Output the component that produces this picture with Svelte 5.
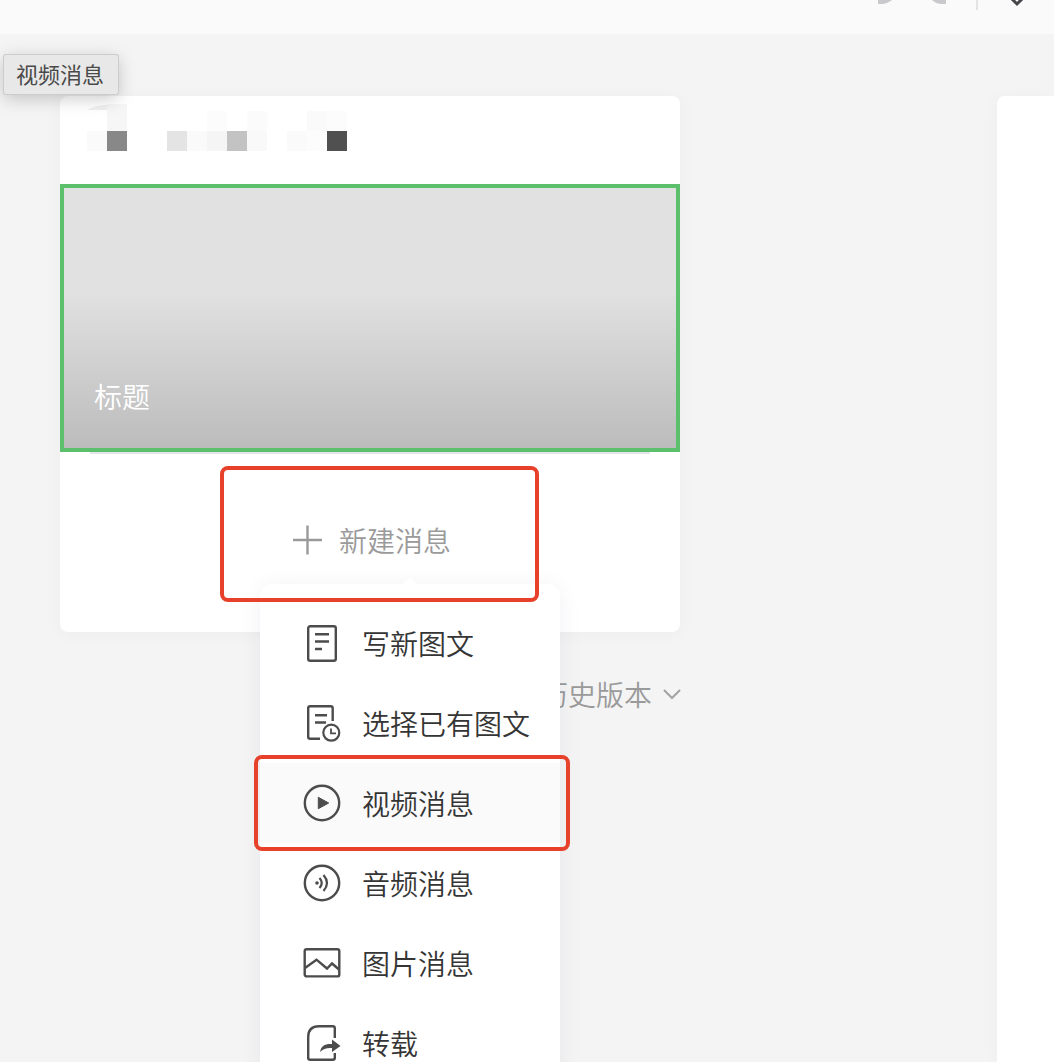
<script>
    let active = $state("video");

    const items = [
        { id: "article", label: "写新图文" },
        { id: "existing", label: "选择已有图文" },
        { id: "video", label: "视频消息" },
        { id: "audio", label: "音频消息" },
        { id: "image", label: "图片消息" },
        { id: "share", label: "转载" },
    ];

    // blurred account name: column, row, colour
    const blocks = [
        [1, 0, "#f6f6f6"],
        [6, 0, "#fcfcfc"],
        [8, 0, "#fbfbfb"],
        [11, 0, "#fafafa"],
        [12, 0, "#fcfcfc"],
        [0, 1, "#fafafa"],
        [1, 1, "#888888"],
        [4, 1, "#e4e4e4"],
        [5, 1, "#fafafa"],
        [6, 1, "#f5f5f5"],
        [7, 1, "#c3c3c3"],
        [8, 1, "#f9f9f9"],
        [10, 1, "#fafafa"],
        [11, 1, "#fcfcfc"],
        [12, 1, "#505050"],
    ];
</script>

<div class="page">
    <header>
        <button aria-label="撤销">
            <svg width="14" height="12" viewBox="0 0 14 12">
                <path d="M0 0H14Q9 4 4 4H0Z" fill="#c9c9cb" />
            </svg>
        </button>
        <button aria-label="重做">
            <svg width="14" height="12" viewBox="0 0 14 12">
                <path d="M0 0H14V4H10Q4 4 0 0Z" fill="#c9c9cb" />
            </svg>
        </button>
        <span class="split"></span>
        <button aria-label="更多">
            <svg width="14" height="12" viewBox="0 0 14 12">
                <path d="M1 -2L7 4L13 -2" fill="none" stroke="#444548" stroke-width="3" />
            </svg>
        </button>
    </header>

    <div class="tooltip" role="tooltip">视频消息</div>

    <main>
        <section class="left">
            <div class="card">
                <div class="account">
                    <svg width="260" height="48" viewBox="0 0 260 48">
                        <path d="M0 7Q8 2 20 2V7Z" fill="#f0f0f0" />
                        <rect x="20" y="1" width="20" height="8" fill="#f6f6f6" />
                        {#each blocks as [col, row, color]}
                            <rect x={col * 20} y={8 + row * 20} width="20" height="20" fill={color} />
                        {/each}
                    </svg>
                </div>
                <div class="cover">标题</div>
                <div class="add">
                    <button class="add-btn">
                        <svg width="36" height="36" viewBox="0 0 36 36" stroke="#9a9a9a" stroke-width="2.4">
                            <path d="M4 18H33M18.5 3.5V32.5" />
                        </svg>
                        新建消息
                    </button>
                    <span class="mark mark-add"></span>
                    <div class="menu">
                        <span class="arrow"></span>
                        {#each items as item}
                            <button
                                class="item"
                                class:active={active === item.id}
                                onclick={() => (active = item.id)}
                            >
                                <svg
                                    width="40"
                                    height="40"
                                    viewBox="0 0 40 40"
                                    fill="none"
                                    stroke="#4c4c4c"
                                    stroke-width="2.4"
                                >
                                    {#if item.id === "article"}
                                        <rect x="6.2" y="3.2" width="27.6" height="34.6" rx="2" />
                                        <path d="M13 11.3H27M13 18.5H27M13 26H20" />
                                    {:else if item.id === "existing"}
                                        <path d="M30.7 18V5.2Q30.7 3.2 28.7 3.2H8.2Q6.2 3.2 6.2 5.2V33.8Q6.2 35.8 8.2 35.8H18" />
                                        <path d="M13 12.2H25M13 19.5H24" />
                                        <circle cx="29.3" cy="29.7" r="8" stroke-width="2.2" />
                                        <path d="M29 25.4V30.4H34" stroke-width="1.8" />
                                    {:else if item.id === "video"}
                                        <circle cx="20" cy="20" r="17.2" />
                                        <path d="M16.3 14.3L26.7 20L16.3 25.7Z" fill="#4c4c4c" stroke-width="1" />
                                    {:else if item.id === "audio"}
                                        <circle cx="20" cy="20" r="17.2" />
                                        <circle cx="15" cy="20" r="1.8" fill="#4c4c4c" stroke="none" />
                                        <path d="M17.5 15Q22 20 17.5 25M21.5 12Q28.5 20 21.5 28" stroke-width="2.2" />
                                    {:else if item.id === "image"}
                                        <rect x="2.7" y="6.2" width="34.6" height="27.2" rx="2" />
                                        <path d="M3 25L14.5 16.7L25 25.5L30 20.5L37 26.5" />
                                    {:else}
                                        <path d="M32.8 15V5.2Q32.8 3.2 30.8 3.2H17Q6.2 3.2 6.2 14V34.8Q6.2 36.8 8.2 36.8H30.8Q32.8 36.8 32.8 34.8V30" />
                                        <path
                                            d="M18 29C19 23 23 20.5 30 21V16.5L38.5 23L30 29V25C25 24.5 21 26 18 29Z"
                                            fill="#4c4c4c"
                                            stroke="none"
                                        />
                                    {/if}
                                </svg>
                                {item.label}
                                {#if item.id === "video"}
                                    <span class="mark mark-item"></span>
                                {/if}
                            </button>
                        {/each}
                    </div>
                </div>
            </div>
            <button class="history">
                历史版本
                <svg width="20" height="20" viewBox="0 0 20 20">
                    <path d="M2 6L10 14L18 6" fill="none" stroke="#a3a3a3" stroke-width="2" />
                </svg>
            </button>
        </section>
        <section class="editor"></section>
    </main>
</div>

<style>
    :global(body) {
        margin: 0;
        background: #f4f4f4;
    }

    .page {
        position: relative;
        display: flex;
        flex-direction: column;
        height: 100vh;
        overflow: hidden;
        background: #f4f4f4;
        font-family: "Noto Sans CJK SC", sans-serif;
        font-size: 28px;
        font-weight: 350;
        line-height: 40px;
        color: #353535;
    }

    button {
        font: inherit;
        color: inherit;
        padding: 0;
        border: none;
        background: none;
        cursor: pointer;
    }

    svg {
        display: block;
        flex: none;
    }

    header {
        display: flex;
        flex: none;
        justify-content: flex-end;
        align-items: flex-start;
        box-sizing: border-box;
        height: 34px;
        padding-right: 30px;
        background: #fafafb;
    }

    header button + button {
        margin-left: 40px;
    }

    .split {
        width: 2px;
        height: 10px;
        margin: 0 32px 0 30px;
        background: #e4e4e7;
    }

    .tooltip {
        position: absolute;
        top: 55px;
        left: 4px;
        z-index: 5;
        padding: 4px 14px 6px 12px;
        border-radius: 2px;
        background: #e8e8e8;
        box-shadow:
            0 0 0 1px #cccccc,
            0 4px 18px rgba(0, 0, 0, 0.22);
        font-size: 22px;
        font-weight: 400;
        line-height: 29px;
        color: #4a4a4a;
    }

    main {
        display: flex;
        flex: 1;
        padding: 62px 0 0 60px;
    }

    .left {
        flex: none;
        width: 620px;
        max-width: 100%;
    }

    .card,
    .editor {
        background: #fff;
        border-radius: 8px;
        box-shadow: 0 2px 20px rgba(0, 0, 0, 0.03);
    }

    .editor {
        flex: 1;
        margin-left: 317px;
        border-radius: 8px 0 0 0;
    }

    .account {
        box-sizing: border-box;
        height: 88px;
        padding: 7px 27px;
    }

    .cover {
        display: flex;
        align-items: flex-end;
        box-sizing: border-box;
        height: 268px;
        padding: 0 30px 32px;
        border: 4px solid #5bbf6b;
        background: linear-gradient(#e1e1e1 40%, #bcbcbc);
        color: #fff;
    }

    .add {
        position: relative;
        display: flex;
        justify-content: center;
        height: 180px;
    }

    .add::before {
        content: "";
        position: absolute;
        top: 0;
        left: 30px;
        right: 30px;
        height: 2px;
        background: #e4e5eb;
    }

    .add-btn {
        display: flex;
        align-items: center;
        gap: 14px;
        width: 100%;
        justify-content: center;
        padding-bottom: 4px;
        color: #9a9a9a;
    }

    .menu {
        position: absolute;
        top: 132px;
        left: 200px;
        z-index: 2;
        width: 300px;
        padding: 19px 0;
        border-radius: 12px;
        background: #fff;
        box-shadow: 0 2px 24px rgba(40, 40, 80, 0.06);
    }

    .arrow {
        position: absolute;
        top: -7px;
        left: 50%;
        width: 0;
        margin-left: -8px;
        border: 8px solid transparent;
        border-top: none;
        border-bottom-color: #fff;
    }

    .item {
        position: relative;
        display: flex;
        align-items: center;
        gap: 20px;
        width: 100%;
        height: 80px;
        padding-left: 42px;
    }

    .item.active {
        background: #fafafa;
    }

    /* red frames that point out the steps */
    .mark {
        position: absolute;
        z-index: 3;
        box-sizing: border-box;
        border: 4px solid #e8412b;
        border-radius: 8px;
        pointer-events: none;
    }

    .mark-add {
        top: 14px;
        left: 160px;
        width: 319px;
        height: 136px;
    }

    .mark-item {
        inset: -8px -10px -8px -6px;
    }

    .history {
        display: flex;
        align-items: center;
        gap: 10px;
        margin: 42px -2px 0 auto;
        color: #9a9a9a;
    }
</style>
